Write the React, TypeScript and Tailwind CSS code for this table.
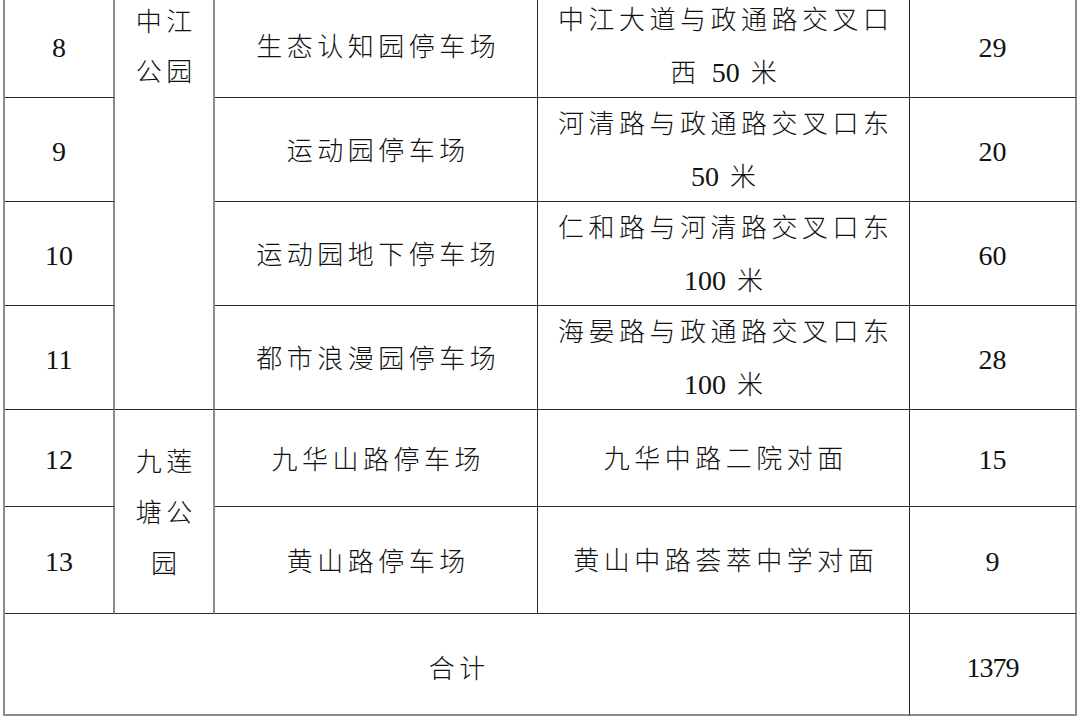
import type { ReactNode } from 'react'

const FONT = "font-['Liberation_Serif','Noto_Sans_CJK_SC',serif]"

// CJK runs are set light; digits stay in the regular serif face
function Zh({ children }: { children: ReactNode }) {
  return <span className="font-light tracking-[4.5px]">{children}</span>
}

function Num({ children }: { children: ReactNode }) {
  return <span className="text-[28px]">{children}</span>
}

type Row = { no: string; name: string; addr: ReactNode; count: string }

const ROWS: Row[] = [
  { no: '8', name: '生态认知园停车场', addr: <><Zh>中江大道与政通路交叉口</Zh><br /><Zh>西 </Zh><Num>50</Num><Zh> 米</Zh></>, count: '29' },
  { no: '9', name: '运动园停车场', addr: <><Zh>河清路与政通路交叉口东</Zh><br /><Num>50</Num><Zh> 米</Zh></>, count: '20' },
  { no: '10', name: '运动园地下停车场', addr: <><Zh>仁和路与河清路交叉口东</Zh><br /><Num>100</Num><Zh> 米</Zh></>, count: '60' },
  { no: '11', name: '都市浪漫园停车场', addr: <><Zh>海晏路与政通路交叉口东</Zh><br /><Num>100</Num><Zh> 米</Zh></>, count: '28' },
  { no: '12', name: '九华山路停车场', addr: <Zh>九华中路二院对面</Zh>, count: '15' },
  { no: '13', name: '黄山路停车场', addr: <Zh>黄山中路荟萃中学对面</Zh>, count: '9' },
]

const ROW_START = ['row-start-1', 'row-start-2', 'row-start-3', 'row-start-4', 'row-start-5', 'row-start-6']

const cell = 'flex items-center justify-center text-center pt-[4px] border-b border-b-[#2a2a2a]'

export default function App() {
  return (
    <div className={`min-h-[720px] w-[1080px] bg-white text-[#111] ${FONT} overflow-hidden`}>
      <div className="ml-[3px] mt-[-6px] w-[1074px] grid grid-cols-[110px_100px_323px_372px_167px] grid-rows-[104px_104px_104px_104px_97px_107px_102px] border-l-2 border-l-[#8c8c8c]">
        {ROWS.map((r, i) => (
          <div key={r.no} className="contents">
            <div className={`${ROW_START[i]} col-start-1 ${cell} border-r-2 border-r-[#8c8c8c] text-[28px]`}>{r.no}</div>
            <div className={`${ROW_START[i]} col-start-3 ${cell} border-r border-r-[#2a2a2a] text-[26px]`}>
              <span className="mr-[-4.5px]"><Zh>{r.name}</Zh></span>
            </div>
            <div className={`${ROW_START[i]} col-start-4 ${cell} border-r border-r-[#2a2a2a] text-[26px] leading-[52px]`}>
              <span className="mr-[-4.5px]">{r.addr}</span>
            </div>
            <div className={`${ROW_START[i]} col-start-5 ${cell} border-r-2 border-r-[#8c8c8c] text-[28px]`}>{r.count}</div>
          </div>
        ))}

        {/* park names, merged cells */}
        <div className="row-start-1 row-span-4 col-start-2 flex justify-center pt-[4px] border-b border-b-[#2a2a2a] border-r-2 border-r-[#8c8c8c] text-[26px] leading-[50px] text-center">
          <span className="mr-[-4.5px]"><Zh>中江<br />公园</Zh></span>
        </div>
        <div className="row-start-5 row-span-2 col-start-2 flex items-center justify-center pt-[4px] border-b border-b-[#2a2a2a] border-r-2 border-r-[#8c8c8c] text-[26px] leading-[51px] text-center">
          <span className="mr-[-4.5px]"><Zh>九莲<br />塘公<br />园</Zh></span>
        </div>

        {/* total */}
        <div className="row-start-7 col-start-1 col-span-4 flex items-center justify-center pt-[10px] border-b-2 border-b-[#8c8c8c] border-r border-r-[#2a2a2a] text-[26px]">
          <span className="mr-[-4.5px]"><Zh>合计</Zh></span>
        </div>
        <div className="row-start-7 col-start-5 flex items-center justify-center pt-[8px] border-b-2 border-b-[#8c8c8c] border-r-2 border-r-[#8c8c8c] text-[28px] tracking-[-1px]">
          1379
        </div>
      </div>
    </div>
  )
}
